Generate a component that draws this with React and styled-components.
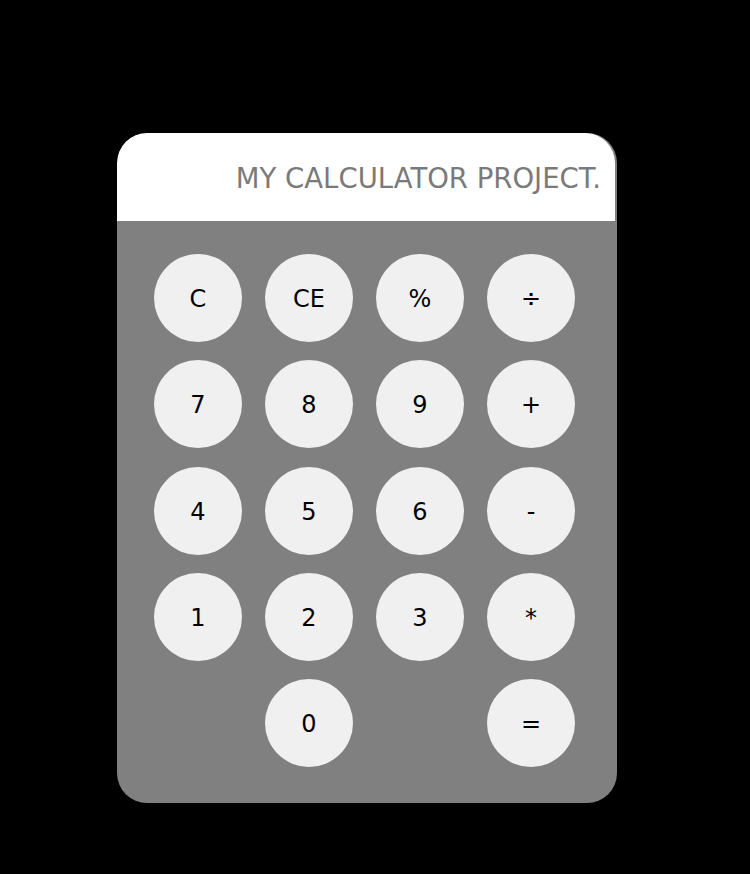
import React, { useState } from 'react'
import styled, { createGlobalStyle } from 'styled-components'

const keys = [
  'C', 'CE', '%', '÷',
  '7', '8', '9', '+',
  '4', '5', '6', '-',
  '1', '2', '3', '*',
  null, '0', null, '=',
]

const App = () => {
  const [display, setDisplay] = useState('MY CALCULATOR PROJECT.')

  return (
    <>
      <GlobalStyle />
      <Page>
        <Calculator>
          <Display>{display}</Display>
          <Keypad>
            {keys.map((k, i) =>
              k === null ? <Blank key={i} /> : (
                <Key key={i} onClick={() => setDisplay(k)}>{k}</Key>
              )
            )}
          </Keypad>
        </Calculator>
      </Page>
    </>
  )
}

const GlobalStyle = createGlobalStyle`
  html, body {
    margin: 0;
    background: #000;
  }
`

const Page = styled.main`
  display: flex;
  align-items: flex-start;
  min-height: 874px;
  padding: 133px 0 0 117px;
  box-sizing: border-box;
  font-family: Tahoma, "DejaVu Sans", sans-serif;
`

const Calculator = styled.section`
  display: flex;
  flex-direction: column;
  width: 500px;
  background: #808080;
  border-radius: 30px;
  overflow: hidden;
`

const Display = styled.div`
  display: flex;
  align-items: center;
  justify-content: flex-end;
  height: 88px;
  margin-right: 2px;
  padding: 2px 14px 0 0;
  box-sizing: border-box;
  background: #fff;
  color: #7a7a7a;
  font-size: 27.5px;
  white-space: nowrap;
  border-radius: 30px 30px 0 0;
`

const Keypad = styled.div`
  display: grid;
  grid-template-columns: repeat(4, 88px);
  grid-auto-rows: 88px;
  column-gap: 23px;
  row-gap: 18.25px;
  padding: 33px 0 36px 37px;
`

const Key = styled.button`
  width: 88px;
  height: 88px;
  border: none;
  border-radius: 50%;
  background: #f0f0f0;
  color: #000;
  font-family: inherit;
  font-size: 24px;
  padding: 2px 0 0;
  cursor: pointer;
`

const Blank = styled.div``

export default App
